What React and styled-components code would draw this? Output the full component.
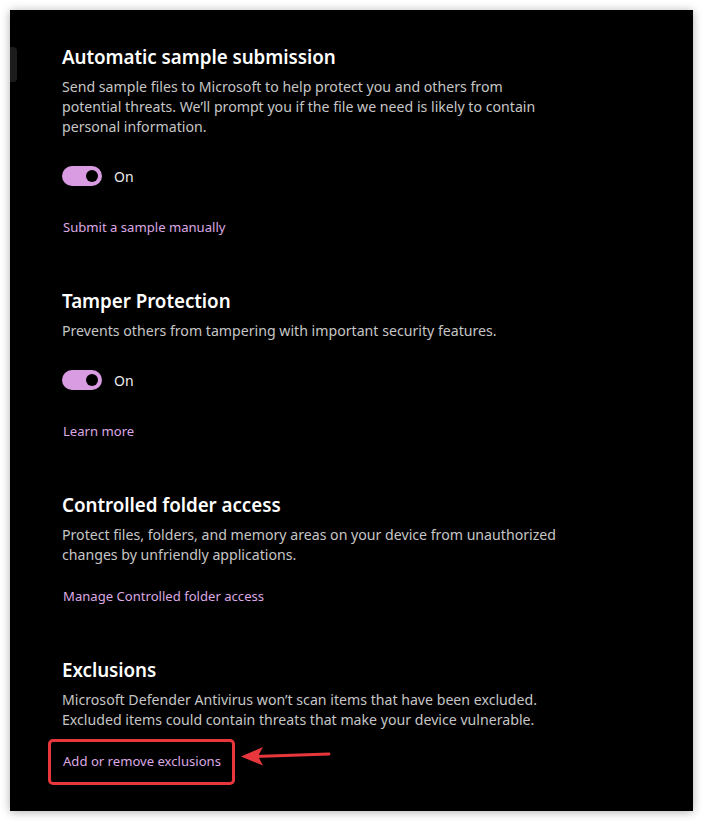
import React from "react";
import styled, { createGlobalStyle } from "styled-components";

const Global = createGlobalStyle`
  html, body { margin: 0; padding: 0; background: #ffffff; }
  body { font-family: "Noto Sans", "Open Sans", sans-serif; }
`;

const Page = styled.div`
  padding: 10px;
  width: 703px;
  height: 821px;
  box-sizing: border-box;
`;

const Window = styled.div`
  width: 683px;
  height: 801px;
  background: #000;
  display: flex;
  box-shadow: 0 1px 9px rgba(0, 0, 0, 0.32);
  overflow: hidden;
`;

const RailStub = styled.div`
  flex: none;
  width: 7px;
  height: 35px;
  margin-top: 37px;
  background: #1c1c1c;
  border-radius: 0 4px 4px 0;
`;

const Content = styled.div`
  flex: 1;
  padding: 33px 0 0 45px;
  display: flex;
  flex-direction: column;
  gap: 50px;
`;

const Section = styled.section`
  display: flex;
  flex-direction: column;
  align-items: flex-start;
`;

const Title = styled.h2`
  margin: 0 0 6px;
  font-size: 18.8px;
  line-height: 28px;
  font-weight: 600;
  color: #ffffff;
  letter-spacing: -0.05px;
`;

const Desc = styled.p`
  margin: 0;
  font-size: 14.15px;
  line-height: 20px;
  color: #c6c6c6;
`;

const ToggleRow = styled.div`
  display: flex;
  align-items: center;
  gap: 12px;
  margin-top: 29px;
  height: 20px;
`;

const Track = styled.span`
  width: 40px;
  height: 20px;
  border-radius: 10px;
  background: #d99be2;
  display: flex;
  align-items: center;
  justify-content: flex-end;
  padding-right: 4px;
  box-sizing: border-box;
`;

const Knob = styled.span`
  width: 12px;
  height: 12px;
  border-radius: 50%;
  background: #000;
`;

const ToggleLabel = styled.span`
  font-size: 14px;
  color: #ececec;
  line-height: 20px;
  padding-top: 1px;
`;

const Link = styled.a`
  display: inline-block;
  margin-top: ${(p) => (p.$afterToggle ? "31px" : "21px")};
  margin-left: 1px;
  font-size: 13.1px;
  line-height: 20px;
  color: #dba9e3;
  text-decoration: none;
  cursor: pointer;
  position: relative;
`;

const Highlight = styled.span`
  position: absolute;
  left: -15px;
  top: -12px;
  width: 187px;
  height: 46px;
  border: 3px solid #e8373c;
  border-radius: 5px;
  box-sizing: border-box;
  pointer-events: none;
`;

const ArrowSvg = styled.svg`
  position: absolute;
  left: 176px;
  top: -7px;
  overflow: visible;
  pointer-events: none;
`;

function Toggle() {
  return (
    <ToggleRow>
      <Track>
        <Knob />
      </Track>
      <ToggleLabel>On</ToggleLabel>
    </ToggleRow>
  );
}

export default function App() {
  return (
    <>
      <Global />
      <Page>
        <Window>
          <RailStub />
          <Content>
            <Section>
              <Title>Automatic sample submission</Title>
              <Desc>
                Send sample files to Microsoft to help protect you and others from
                <br />
                potential threats. We’ll prompt you if the file we need is likely to contain
                <br />
                personal information.
              </Desc>
              <Toggle />
              <Link $afterToggle>Submit a sample manually</Link>
            </Section>

            <Section>
              <Title>Tamper Protection</Title>
              <Desc>Prevents others from tampering with important security features.</Desc>
              <Toggle />
              <Link $afterToggle>Learn more</Link>
            </Section>

            <Section>
              <Title>Controlled folder access</Title>
              <Desc>
                Protect files, folders, and memory areas on your device from unauthorized
                <br />
                changes by unfriendly applications.
              </Desc>
              <Link>Manage Controlled folder access</Link>
            </Section>

            <Section>
              <Title>Exclusions</Title>
              <Desc>
                Microsoft Defender Antivirus won’t scan items that have been excluded.
                <br />
                Excluded items could contain threats that make your device vulnerable.
              </Desc>
              <Link>
                Add or remove exclusions
                <Highlight />
                <ArrowSvg width="92" height="24" viewBox="0 0 92 24">
                  <line x1="90" y1="10" x2="16" y2="12.5" stroke="#e8373c" strokeWidth="3" strokeLinecap="round" />
                  <polygon points="2,12.5 24,3 19,12.3 24,21.5" fill="#e8373c" />
                </ArrowSvg>
              </Link>
            </Section>
          </Content>
        </Window>
      </Page>
    </>
  );
}
